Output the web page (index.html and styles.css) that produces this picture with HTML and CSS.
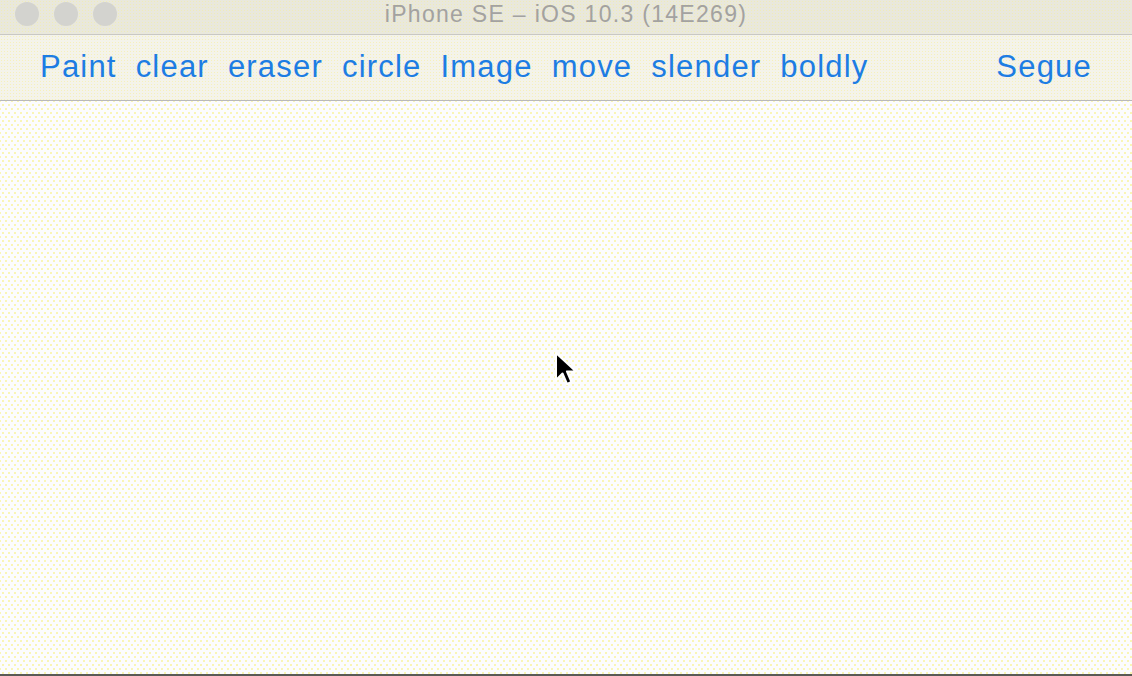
FILE: index.html
```html
<!DOCTYPE html>
<html>
<head>
<meta charset="utf-8">
<link rel="stylesheet" href="styles.css">
</head>
<body>
<div class="window">
  <header class="titlebar">
    <div class="lights">
      <span class="light"></span>
      <span class="light"></span>
      <span class="light"></span>
    </div>
    <div class="title">iPhone SE – iOS 10.3 (14E269)</div>
  </header>
  <nav class="toolbar">
    <div class="tools">
      <span class="btn">Paint</span>
      <span class="btn">clear</span>
      <span class="btn">eraser</span>
      <span class="btn">circle</span>
      <span class="btn">Image</span>
      <span class="btn">move</span>
      <span class="btn">slender</span>
      <span class="btn">boldly</span>
    </div>
    <span class="btn">Segue</span>
  </nav>
  <main class="canvas">
    <svg class="cursor" width="26" height="38" viewBox="0 0 26 38">
      <path d="M2 1 L2 28 L8.5 21.5 L13 32 L17.5 30 L13 19.5 L22 19.5 Z" fill="#000" stroke="#fff" stroke-width="2" stroke-linejoin="round"/>
    </svg>
  </main>
</div>
</body>
</html>
```
FILE: styles.css
```css
html, body {
  margin: 0;
  padding: 0;
  background: #fcfcfb;
}
.window {
  width: 1132px;
  height: 676px;
  display: flex;
  flex-direction: column;
  font-family: "Liberation Sans", Arial, sans-serif;
  overflow: hidden;
}
.titlebar {
  height: 35px;
  flex: none;
  position: relative;
  display: flex;
  align-items: center;
  justify-content: center;
  background-color: #e9e8dc;
  background-image: radial-gradient(circle, rgba(250,240,120,0.35) 0.8px, transparent 1px);
  background-size: 3px 3px;
  border-bottom: 1px solid #c9c8c4;
  box-sizing: border-box;
}
.lights {
  position: absolute;
  left: 15px;
  top: 2px;
  display: flex;
  gap: 15px;
}
.light {
  width: 24px;
  height: 24px;
  border-radius: 50%;
  background: #d3d3cf;
}
.title {
  font-size: 23px;
  color: #a3a2a0;
  letter-spacing: 1.3px;
  margin-top: -5px;
}
.toolbar {
  height: 66px;
  flex: none;
  box-sizing: border-box;
  display: flex;
  align-items: center;
  justify-content: space-between;
  padding: 0 40px 0 40px;
  background-color: #f4f3ea;
  background-image: radial-gradient(circle, rgba(250,235,100,0.35) 0.8px, transparent 1px);
  background-size: 3px 3px;
  border-bottom: 1px solid #b9b9b9;
}
.tools {
  display: flex;
  gap: 19px;
}
.btn {
  font-size: 31px;
  letter-spacing: 1.2px;
  color: #1d7de3;
  line-height: 1;
  margin-top: -2px;
}
.canvas {
  flex: 1;
  position: relative;
  background-color: #fcfcfe;
  background-image:
    radial-gradient(circle, rgba(246,236,90,0.8) 0.55px, transparent 0.9px),
    radial-gradient(circle, rgba(246,236,90,0.8) 0.55px, transparent 0.9px);
  background-size: 6px 8px, 6px 8px;
  background-position: 0 0, 3px 4px;
  border-bottom: 2px solid #5a5a56;
}
.cursor {
  position: absolute;
  left: 554px;
  top: 251px;
}
```
